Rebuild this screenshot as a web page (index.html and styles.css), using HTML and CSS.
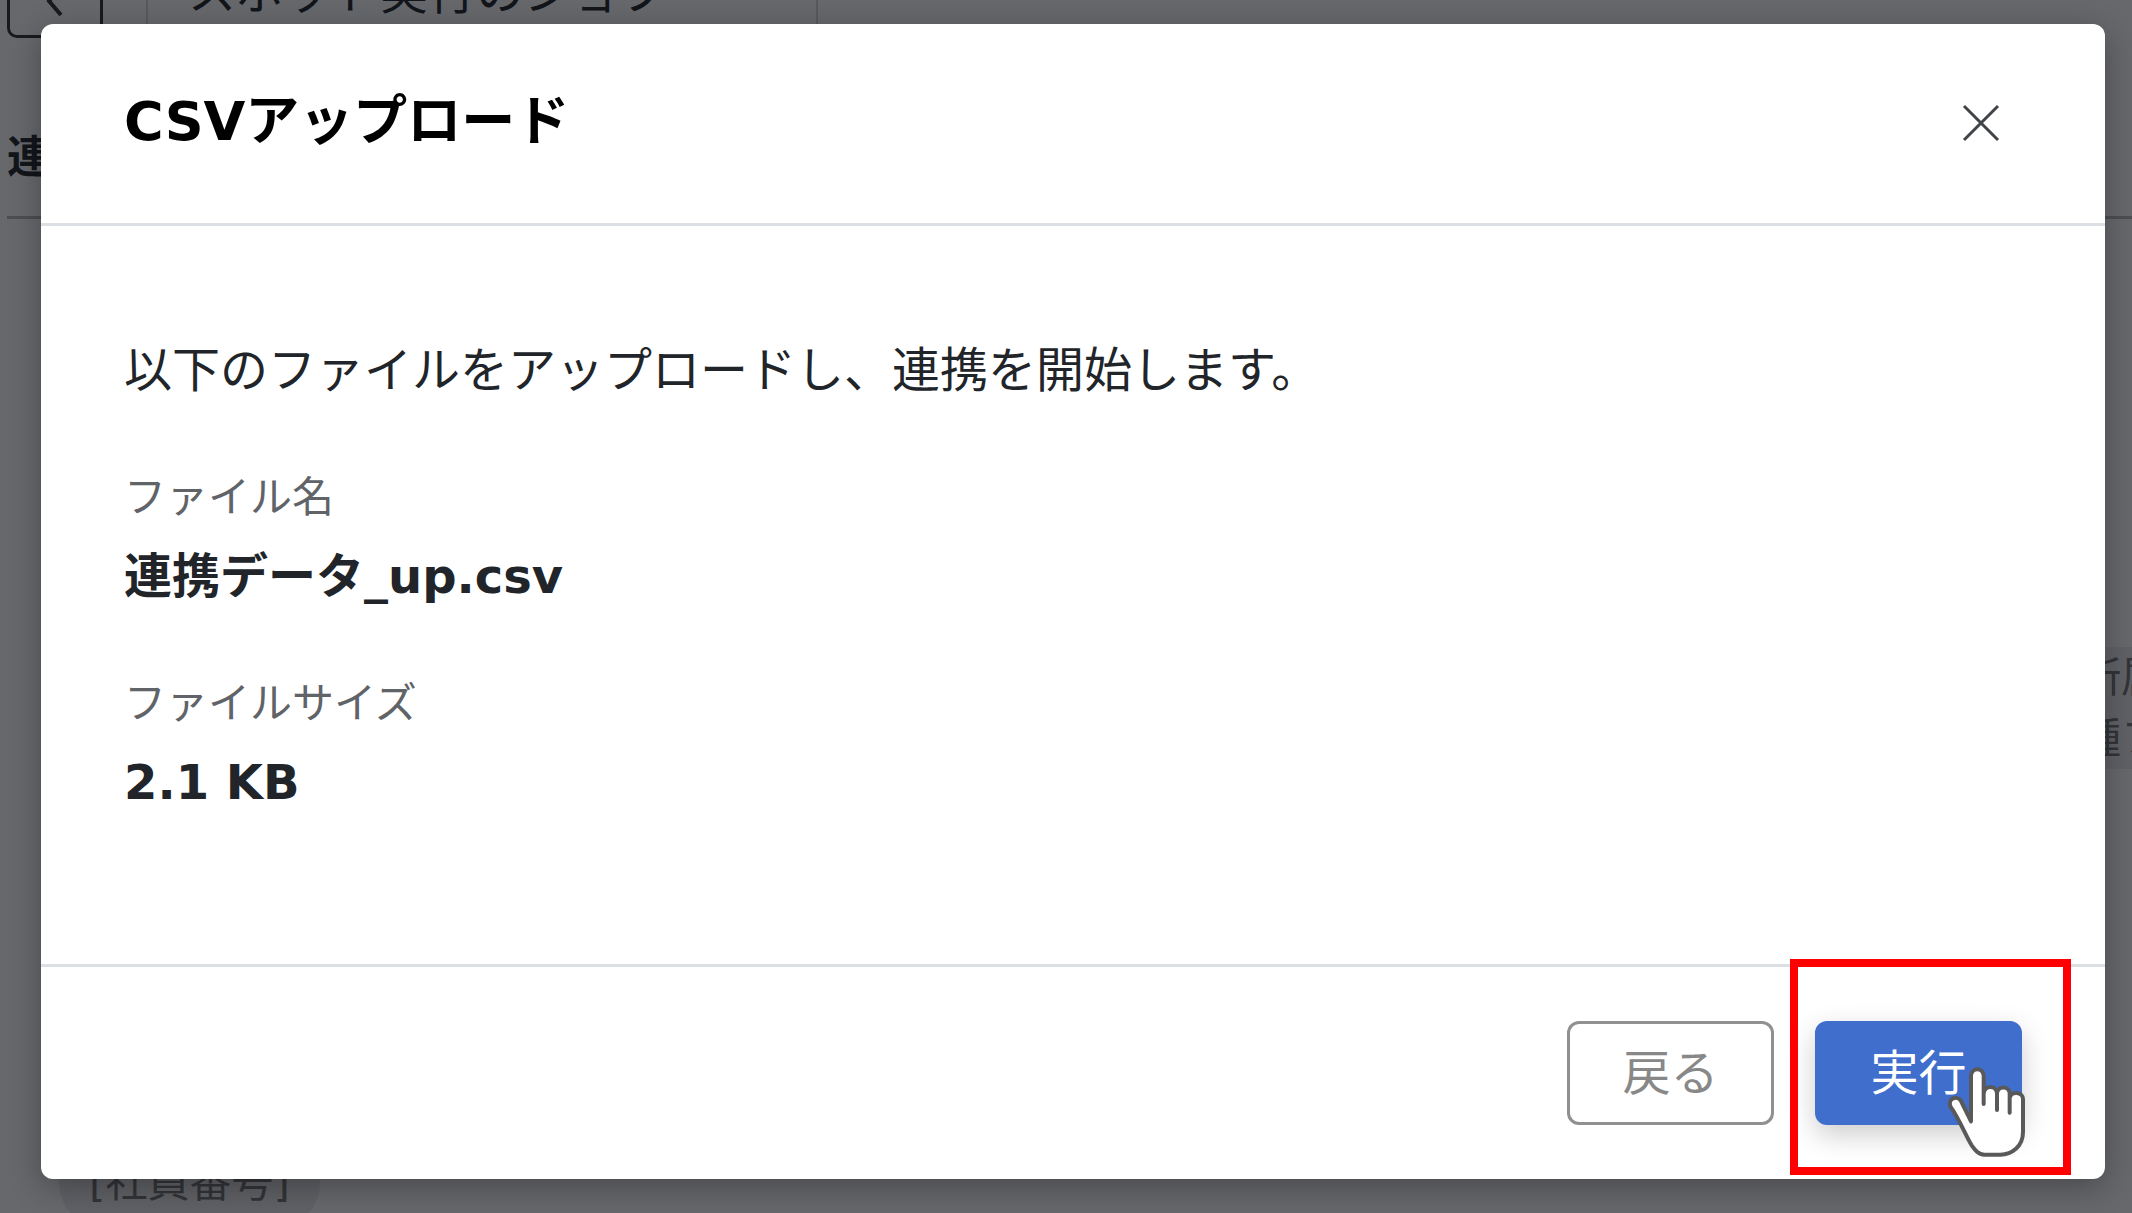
FILE: index.html
```
<!DOCTYPE html>
<html lang="ja">

<head>
    <meta charset="UTF-8">
    <meta name="viewport" content="width=device-width, initial-scale=1.0">
    <title>CSVアップロード</title>
    <link rel="stylesheet" href="styles.css">
</head>

<body>
    <div class="page">
        <div class="toolbar">
            <button type="button" class="toolbar-back" aria-label="前へ">
                <svg width="20" height="32" viewBox="0 0 20 32"><path d="M16 2L4 16l12 14" /></svg>
            </button>
            <div class="job-name">スポット実行のジョブ</div>
        </div>
        <h2 class="section-title">連携</h2>
        <div class="chip-row">
            <span class="chip chip-tall">新所属<br>職種フ</span>
        </div>
        <div class="chip-row chip-row-left">
            <span class="chip">[社員番号]</span>
        </div>
    </div>

    <div class="overlay">
        <div class="modal" role="dialog" aria-modal="true" aria-labelledby="modalTitle">
            <div class="modal-header">
                <h1 id="modalTitle">CSVアップロード</h1>
                <button type="button" class="close" aria-label="閉じる">
                    <svg width="40" height="40" viewBox="0 0 40 40"><path d="M3 4l34 34M37 4L3 38" /></svg>
                </button>
            </div>
            <div class="modal-body">
                <p class="message">以下のファイルをアップロードし、連携を開始します。</p>
                <dl class="details">
                    <dt>ファイル名</dt>
                    <dd>連携データ_up.csv</dd>
                    <dt>ファイルサイズ</dt>
                    <dd>2.1 KB</dd>
                </dl>
            </div>
            <div class="modal-footer">
                <button type="button" class="btn">戻る</button>
                <div class="highlight">
                    <button type="button" class="btn btn-primary">実行</button>
                    <svg class="hand" width="84" height="96" viewBox="0 0 252 288">
                        <path d="M78 169V32a18 18 0 0 1 38 0v85V85c4-26 38-24 40 0v50V84c4-24 36-20 38 0v59v-44c4-22 40-20 40 4v98c0 44-34 68-68 68h-48c-18 0-28-14-38-28C60 207 42 160 16 124c-8-24 20-34 32-16z" />
                    </svg>
                </div>
            </div>
        </div>
    </div>
</body>

</html>
```
FILE: styles.css
```
* {
    box-sizing: border-box;
}

body {
    margin: 0;
    font-family: "DejaVu Sans", "Noto Sans CJK JP", sans-serif;
    font-size: 48px;
    color: #212529;
    background-color: #fff;
}

h1,
h2,
p,
dl,
dd {
    margin: 0;
}

button {
    font-family: inherit;
    cursor: pointer;
}

svg {
    display: block;
    fill: none;
}

/* page behind the dialog */
.page {
    height: 100vh;
    padding-left: 7px;
    overflow: hidden;
}

.toolbar {
    display: flex;
    align-items: flex-end;
    gap: 43px;
    height: 38px;
}

.toolbar-back {
    display: flex;
    justify-content: center;
    width: 96px;
    height: 96px;
    padding-top: 40px;
    background: none;
    border: 3px solid #333;
    border-radius: 10px;
}

.toolbar-back path {
    stroke: #333;
    stroke-width: 4;
}

.job-name {
    width: 672px;
    height: 104px;
    padding: 26px 40px;
    line-height: 60px;
    border: 2px solid #d5d8dc;
}

.section-title {
    height: 181px;
    padding-top: 84px;
    font-size: 44px;
    line-height: 72px;
    border-bottom: 3px solid #bbb;
}

.chip-row {
    display: flex;
    justify-content: flex-end;
    height: 520px;
    padding-top: 428px;
    color: #777;
}

.chip-row-left {
    justify-content: flex-start;
    padding: 398px 52px 0;
}

.chip {
    flex: none;
    height: 92px;
    padding: 0 30px;
    font-size: 42px;
    line-height: 92px;
    background-color: #ededee;
    border-radius: 46px;
}

.chip-tall {
    height: 122px;
    margin-right: -61px;
    line-height: 61px;
    border-radius: 0;
}

/* dialog */
.overlay {
    position: absolute;
    inset: 0;
    padding: 24px 27px 34px 41px;
    background-color: rgba(10, 11, 17, 0.62);
}

.modal {
    display: flex;
    flex-direction: column;
    min-height: 100%;
    background-color: #fff;
    border-radius: 12px;
    box-shadow: 0 8px 32px rgba(0, 0, 0, 0.3);
}

.modal-header {
    display: flex;
    justify-content: space-between;
    align-items: center;
    padding: 56px 104px 59px 83px;
    border-bottom: 3px solid #dcdfe3;
}

.modal-header h1 {
    font-size: 54px;
    line-height: 84px;
    color: #000;
}

.close {
    padding: 0;
    background: none;
    border: none;
}

.close path {
    stroke: #404347;
    stroke-width: 3;
}

.modal-body {
    flex: 1;
    padding: 108px 83px 80px;
}

.message {
    line-height: 72px;
}

.details {
    padding-top: 60px;
}

.details dt {
    font-size: 42px;
    line-height: 64px;
    color: #606367;
}

.details dd {
    padding: 10px 0 60px;
    font-weight: bold;
    line-height: 72px;
}

.modal-footer {
    display: flex;
    justify-content: flex-end;
    gap: 41px;
    padding: 54px 83px;
    border-top: 3px solid #dcdfe3;
}

.btn {
    width: 207px;
    height: 104px;
    padding: 0 0 8px;
    font-size: 48px;
    color: #888;
    background-color: #fff;
    border: 3px solid #909090;
    border-radius: 12px;
}

.btn-primary {
    color: #fff;
    background-color: #406ecd;
    border-color: #406ecd;
    box-shadow: 0 10px 28px rgba(0, 0, 0, 0.2);
}

.highlight {
    position: relative;
}

.highlight::after {
    content: "";
    position: absolute;
    inset: -62px -49px -50px -25px;
    border: 8px solid #f00;
}

.hand {
    position: absolute;
    right: -7px;
    bottom: -36px;
}

.hand path {
    fill: #fff;
    stroke: #595959;
    stroke-width: 12;
    stroke-linejoin: round;
}
```
